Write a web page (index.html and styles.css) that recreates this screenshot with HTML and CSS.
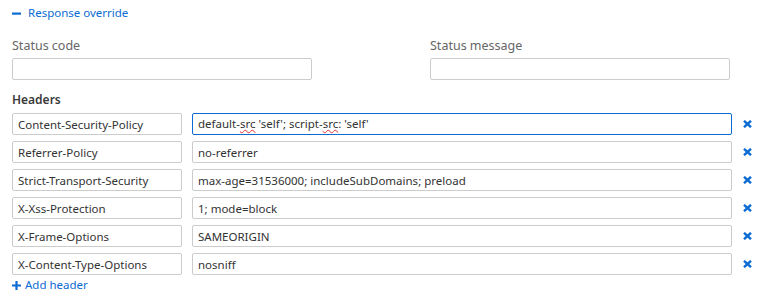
FILE: index.html
```html
<!DOCTYPE html>
<html>
<head>
    <meta charset="utf-8">
    <link rel="stylesheet" href="styles.css">
</head>
<body>
    <div class="ro-panel">
        <a class="ro-toggle" href="#">
            <svg class="ro-icon" width="9" height="9" viewBox="0 0 9 9"><rect x="0" y="3.5" width="9" height="2.2" fill="currentColor"/></svg>
            Response override
        </a>

        <div class="ro-status">
            <div class="ro-field">
                <label class="ro-label">Status code</label>
                <input class="ro-input" type="text">
            </div>
            <div class="ro-field">
                <label class="ro-label">Status message</label>
                <input class="ro-input" type="text">
            </div>
        </div>

        <h4 class="ro-heading">Headers</h4>
        <div class="ro-headers">
            <div class="ro-row">
                <input class="ro-input ro-name" value="Content-Security-Policy">
                <div class="ro-input ro-value ro-focus" contenteditable="true">default-<span class="ro-typo">src</span> 'self'; script-<span class="ro-typo">src</span>: 'self'</div>
                <a class="ro-remove" href="#"><svg width="9" height="8" viewBox="0 0 9 8"><path d="M1 0.8 L8 7.2 M8 0.8 L1 7.2" stroke="currentColor" stroke-width="2.4"/></svg></a>
            </div>
            <div class="ro-row">
                <input class="ro-input ro-name" value="Referrer-Policy">
                <input class="ro-input ro-value" value="no-referrer">
                <a class="ro-remove" href="#"><svg width="9" height="8" viewBox="0 0 9 8"><path d="M1 0.8 L8 7.2 M8 0.8 L1 7.2" stroke="currentColor" stroke-width="2.4"/></svg></a>
            </div>
            <div class="ro-row">
                <input class="ro-input ro-name" value="Strict-Transport-Security">
                <input class="ro-input ro-value" value="max-age=31536000; includeSubDomains; preload">
                <a class="ro-remove" href="#"><svg width="9" height="8" viewBox="0 0 9 8"><path d="M1 0.8 L8 7.2 M8 0.8 L1 7.2" stroke="currentColor" stroke-width="2.4"/></svg></a>
            </div>
            <div class="ro-row">
                <input class="ro-input ro-name" value="X-Xss-Protection">
                <input class="ro-input ro-value" value="1; mode=block">
                <a class="ro-remove" href="#"><svg width="9" height="8" viewBox="0 0 9 8"><path d="M1 0.8 L8 7.2 M8 0.8 L1 7.2" stroke="currentColor" stroke-width="2.4"/></svg></a>
            </div>
            <div class="ro-row">
                <input class="ro-input ro-name" value="X-Frame-Options">
                <input class="ro-input ro-value" value="SAMEORIGIN">
                <a class="ro-remove" href="#"><svg width="9" height="8" viewBox="0 0 9 8"><path d="M1 0.8 L8 7.2 M8 0.8 L1 7.2" stroke="currentColor" stroke-width="2.4"/></svg></a>
            </div>
            <div class="ro-row">
                <input class="ro-input ro-name" value="X-Content-Type-Options">
                <input class="ro-input ro-value" value="nosniff">
                <a class="ro-remove" href="#"><svg width="9" height="8" viewBox="0 0 9 8"><path d="M1 0.8 L8 7.2 M8 0.8 L1 7.2" stroke="currentColor" stroke-width="2.4"/></svg></a>
            </div>
        </div>

        <a class="ro-add" href="#">
            <svg class="ro-icon" width="9" height="9" viewBox="0 0 9 9"><path d="M0 4.5 H9 M4.5 0 V9" stroke="currentColor" stroke-width="2.2"/></svg>
            Add header
        </a>
    </div>
</body>
</html>
```

FILE: styles.css
```css
body {
    margin: 0;
    font-family: 'Noto Sans', sans-serif;
    font-size: 11.5px;
    color: #333;
    background: #fff;
}

.ro-panel {
    padding: 5px 12px 0 12px;
}

.ro-toggle, .ro-add {
    display: flex;
    align-items: center;
    gap: 7px;
    color: #0b6bd3;
    text-decoration: none;
    line-height: 16px;
}

.ro-icon {
    display: block;
}

.ro-status {
    display: grid;
    grid-template-columns: 300px 300px;
    column-gap: 118px;
    margin-top: 16px;
}

.ro-label {
    display: block;
    color: #666;
    font-size: 12.5px;
    line-height: 18px;
    margin-bottom: 3px;
}

.ro-input {
    box-sizing: border-box;
    height: 22px;
    margin: 0;
    padding: 0 5px;
    border: 1px solid #ccc;
    border-radius: 2px;
    font-family: inherit;
    font-size: 11.5px;
    color: #333;
    background: #fff;
    outline: none;
}

.ro-status .ro-input {
    width: 300px;
}

.ro-heading {
    margin: 12px 0 5px 0;
    font-size: 12px;
    font-weight: 600;
    line-height: 16px;
    color: #3a3a3a;
}

.ro-headers {
    display: flex;
    flex-direction: column;
    gap: 6px;
}

.ro-row {
    display: flex;
    align-items: center;
}

.ro-name {
    width: 170px;
}

.ro-value {
    width: 540px;
    margin-left: 10px;
    line-height: 19px;
    white-space: nowrap;
    overflow: hidden;
}

.ro-focus {
    border-color: #0b6bd3;
}

.ro-typo {
    text-decoration: underline wavy #e03030;
    text-decoration-thickness: 1px;
    text-underline-offset: 1px;
}

.ro-remove {
    display: block;
    margin-left: 11px;
    color: #0b6bd3;
}

.ro-remove svg {
    display: block;
}

.ro-add {
    gap: 4px;
    margin-top: 2px;
}
```
